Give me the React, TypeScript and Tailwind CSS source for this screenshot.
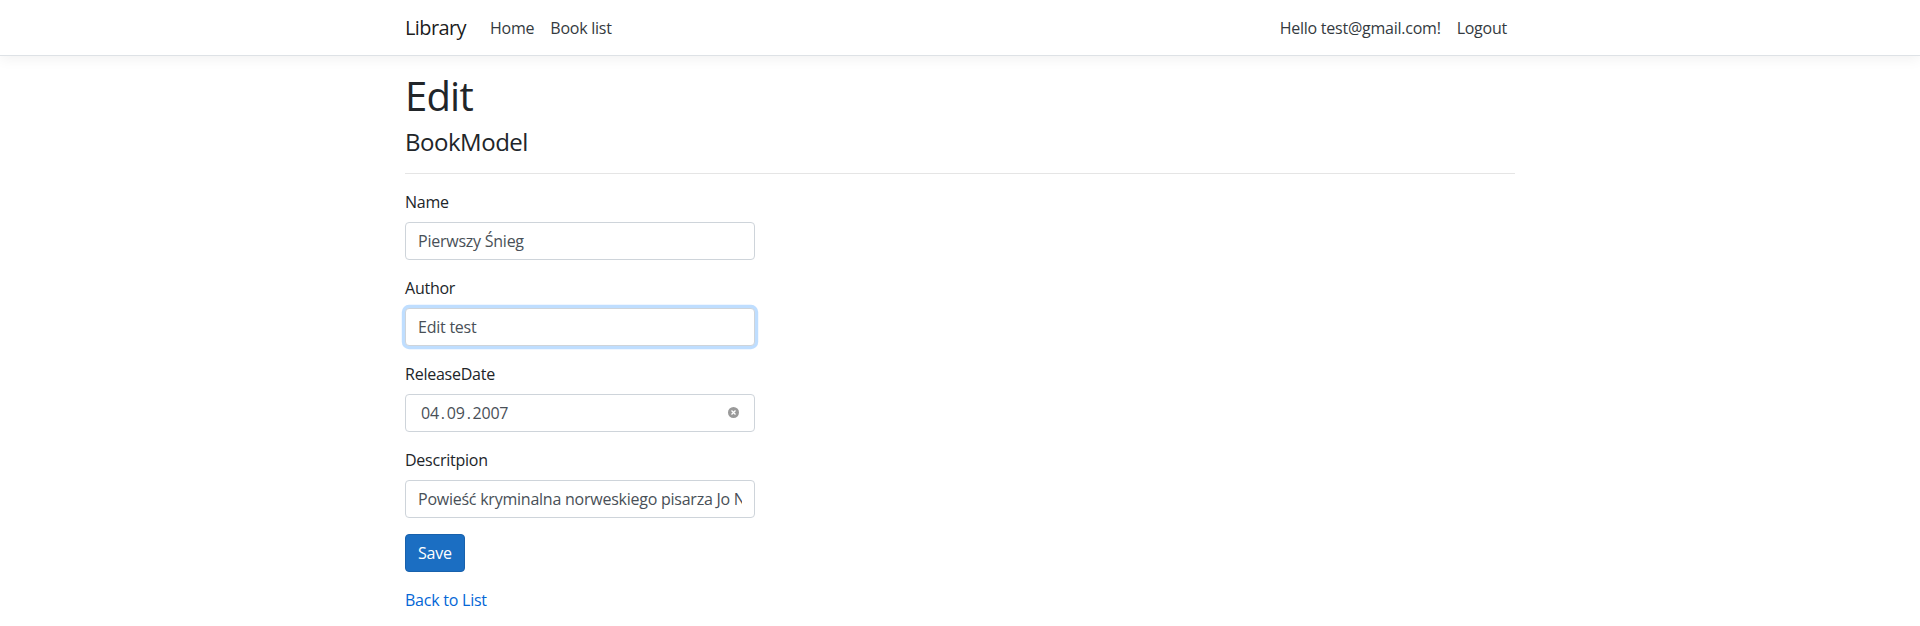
const font = { fontFamily: '"Open Sans", "Noto Sans", Arial, sans-serif' };

function Field({ label, children }: { label: string; children: React.ReactNode }) {
  return (
    <div className="mb-4">
      <label className="mb-2 inline-block leading-6">{label}</label>
      {children}
    </div>
  );
}

const inputCls =
  'block h-[38px] w-full rounded border border-[#ced4da] bg-white px-3 py-1.5 text-base leading-6 tracking-[-0.015em] text-[#495057] outline-none';

export default function App() {
  return (
    <div
      className="min-h-[626px] bg-white text-base leading-6 tracking-[-0.015em] text-[#212529]"
      style={font}
    >
      <header>
        <nav className="mb-4 border-b border-[#dee2e6] bg-white shadow-[0_4px_12px_rgba(0,0,0,0.05)]">
          <div className="mx-auto flex h-[55px] w-[1140px] items-center px-[15px]">
            <a className="mr-4 py-[5px] text-xl leading-[30px] tracking-[-0.03em] text-[rgba(0,0,0,0.9)]">
              Library
            </a>
            <ul className="flex flex-1 items-center">
              <li>
                <a className="block px-2 py-2 text-[#343a40]">Home</a>
              </li>
              <li>
                <a className="block px-2 py-2 text-[#343a40]">Book list</a>
              </li>
            </ul>
            <ul className="flex items-center">
              <li>
                <span className="block px-2 py-2 text-[#343a40]">Hello test@gmail.com!</span>
              </li>
              <li>
                <a className="block px-2 py-2 text-[#343a40]">Logout</a>
              </li>
            </ul>
          </div>
        </nav>
      </header>

      <div className="mx-auto w-[1140px] px-[15px]">
        <main className="pb-4">
          <h1 className="mb-2 text-[40px] font-normal leading-[48px] tracking-[-0.02em]">Edit</h1>
          <h4 className="text-2xl font-normal leading-[28.8px] tracking-[-0.02em]">BookModel</h4>
          <hr className="my-4 border-t border-[rgba(0,0,0,0.1)]" />

          <div className="w-[350px]">
            <form>
              <Field label="Name">
                <input className={inputCls} defaultValue="Pierwszy Śnieg" />
              </Field>
              <Field label="Author">
                <input
                  className={`${inputCls} border-[#80bdff] shadow-[0_0_0_3.2px_rgba(0,123,255,0.25)]`}
                  defaultValue="Edit test"
                />
              </Field>
              <Field label="ReleaseDate">
                <div className={`${inputCls} flex items-center`}>
                  <span className="ml-[3px]">04</span>
                  <span className="mx-[2px]">.</span>
                  <span>09</span>
                  <span className="mx-[2px]">.</span>
                  <span>2007</span>
                  <span className="ml-auto mr-[3px] flex h-[11px] w-[11px] items-center justify-center rounded-full bg-[#9a9a9a]">
                    <svg width="7" height="7" viewBox="0 0 7 7">
                      <path d="M1.5 1.5l4 4M5.5 1.5l-4 4" stroke="#fff" strokeWidth="1.3" />
                    </svg>
                  </span>
                </div>
              </Field>
              <Field label="Descritpion">
                <input
                  className={inputCls}
                  defaultValue="Powieść kryminalna norweskiego pisarza Jo Nesbø"
                />
              </Field>
              <div className="mb-4">
                <button
                  type="button"
                  className="h-[38px] rounded border border-[#1861ac] bg-[#1b6ec2] px-3 py-1.5 text-base leading-6 text-white"
                >
                  Save
                </button>
              </div>
            </form>
          </div>

          <div>
            <a className="text-[#0366d6]">Back to List</a>
          </div>
        </main>
      </div>
    </div>
  );
}
